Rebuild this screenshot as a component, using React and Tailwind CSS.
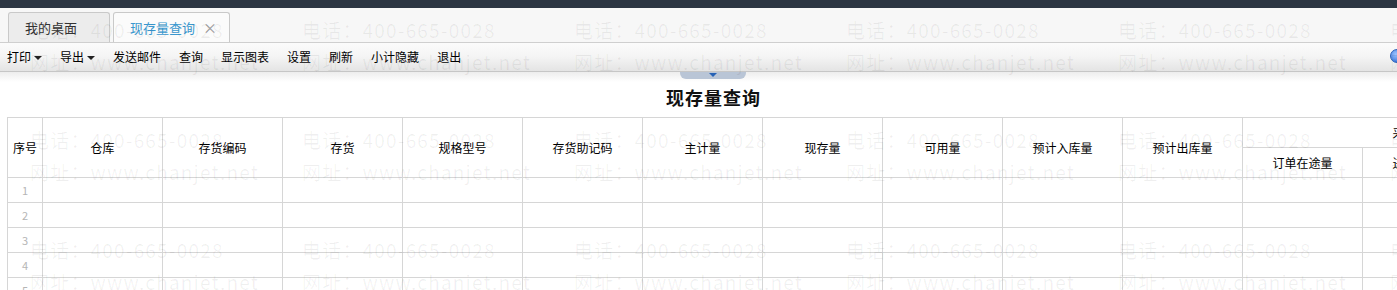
const cols = ['仓库', '存货编码', '存货', '规格型号', '存货助记码', '主计量', '现存量', '可用量', '预计入库量', '预计出库量'];
const tools = [
  { label: '打印', menu: true },
  { label: '导出', menu: true },
  { label: '发送邮件' },
  { label: '查询' },
  { label: '显示图表' },
  { label: '设置' },
  { label: '刷新' },
  { label: '小计隐藏' },
  { label: '退出' },
];

function Watermark() {
  const cells = Array.from({ length: 18 });
  return (
    <div className="pointer-events-none absolute inset-0 overflow-hidden pl-[30px] pt-[18px]">
      <div className="grid grid-cols-[repeat(6,272px)] auto-rows-[110px]">
        {cells.map((_, i) => (
          <div key={i} className="flex flex-col gap-2 whitespace-nowrap text-[19px] leading-6 tracking-[1.2px] text-black/[0.06]">
            <span>电话：400-665-0028</span>
            <span>网址：www.chanjet.net</span>
          </div>
        ))}
      </div>
    </div>
  );
}

export default function App() {
  return (
    <div className="relative h-[290px] w-[1397px] overflow-hidden bg-white font-['Noto_Sans_CJK_SC','Noto_Sans',sans-serif] text-[12px] text-black">
      <div className="h-2 bg-[#2c3643]" />

      {/* tabs */}
      <div className="flex h-[35px] items-end gap-[3px] border-b border-[#cfcfcf] bg-[#f7f7f7] pl-2">
        <div className="flex h-[30px] w-[102px] items-center rounded-t-[3px] border border-b-0 border-[#c9c9c9] bg-[#ececec] pl-4 text-[13px] text-[#333]">
          我的桌面
        </div>
        <div className="flex h-[30px] w-[117px] items-center gap-2 rounded-t-[3px] border border-b-0 border-[#c9c9c9] bg-[#fbfbfb] pl-4 text-[13px] text-[#3a98cf]">
          现存量查询
          <span className="text-[14px] text-[#9a9a9a]">×</span>
        </div>
      </div>

      {/* toolbar */}
      <div className="relative flex h-[29px] items-center border-b border-[#c6c6c6] bg-gradient-to-b from-[#fbfbfb] via-[#f4f4f4] to-[#e4e4e4] pl-[7px]">
        {tools.map((t) => (
          <div key={t.label} className="mr-[18px] flex items-center gap-[3px] leading-none">
            {t.label}
            {t.menu && <span className="mt-[1px] border-x-[4px] border-t-[4px] border-x-transparent border-t-[#222]" />}
          </div>
        ))}
        <div className="absolute left-[1390px] top-[6px] h-[14px] w-[14px] rounded-full border border-[#2a5fb8] bg-[radial-gradient(circle_at_40%_35%,#9cc4ff,#1f62d6)]" />
      </div>
      <div className="relative h-[10px] bg-gradient-to-b from-[#ededed] to-white">
        <div className="absolute left-[680px] top-0 flex h-[7px] w-[66px] justify-center rounded-b-[6px] bg-[#b9c5d6]">
          <span className="mt-[1px] border-x-[4px] border-t-[4px] border-x-transparent border-t-[#2762b5]" />
        </div>
      </div>

      <div className="flex h-[35px] items-center justify-center pl-[30px] font-['Liberation_Serif','Noto_Sans_CJK_SC',serif] text-[18px] font-bold tracking-[1px] text-[#111]">
        现存量查询
      </div>

      {/* table */}
      <div className="pl-[7px]">
        <table className="w-[1595px] table-fixed border-collapse text-center">
          <colgroup>
            <col className="w-[35px]" />
            {Array.from({ length: 13 }).map((_, i) => (
              <col key={i} className="w-[120px]" />
            ))}
          </colgroup>
          <thead>
            <tr className="h-[30px]">
              <th rowSpan={2} className="border border-[#d6d6d6] font-normal">序号</th>
              {cols.map((c) => (
                <th key={c} rowSpan={2} className="border border-[#d6d6d6] font-normal">{c}</th>
              ))}
              <th colSpan={3} className="border border-[#d6d6d6] font-normal">采购在途量</th>
            </tr>
            <tr className="h-[30px]">
              <th className="border border-[#d6d6d6] font-normal">订单在途量</th>
              <th className="border border-[#d6d6d6] font-normal">进货在途量</th>
              <th className="border border-[#d6d6d6] font-normal">在途合计</th>
            </tr>
          </thead>
          <tbody>
            {[1, 2, 3, 4, 5, 6].map((n) => (
              <tr key={n} className="h-[25px]">
                <td className="border border-[#d6d6d6] text-[11px] text-[#b5b5b5]">{n}</td>
                {Array.from({ length: 13 }).map((_, i) => (
                  <td key={i} className="border border-[#d6d6d6]" />
                ))}
              </tr>
            ))}
          </tbody>
        </table>
      </div>

      <Watermark />
    </div>
  );
}
